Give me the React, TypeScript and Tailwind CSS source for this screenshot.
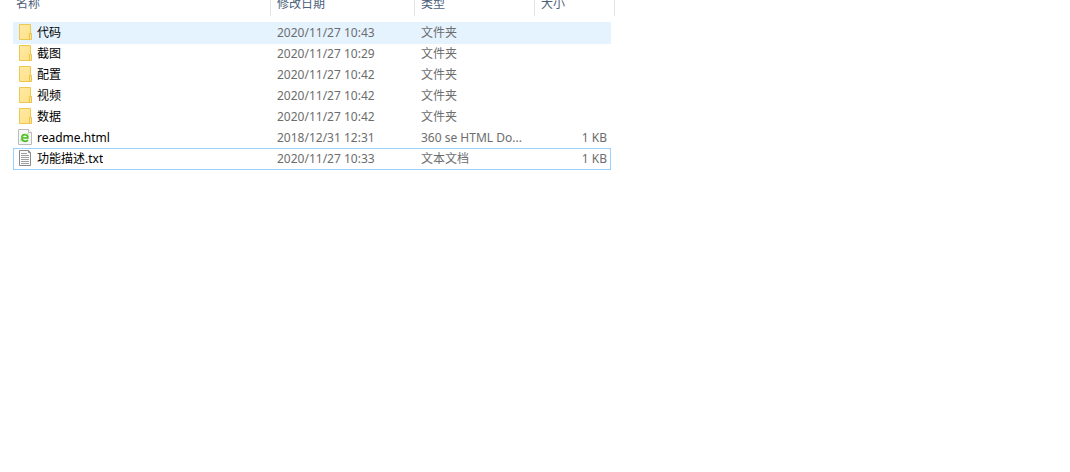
import React from "react";
import clsx from "clsx";

type FileKind = "folder" | "html" | "txt";

interface FileItem {
  name: string;
  kind: FileKind;
  modified: string;
  type: string;
  size?: string;
}

const files: FileItem[] = [
  { name: "代码", kind: "folder", modified: "2020/11/27 10:43", type: "文件夹" },
  { name: "截图", kind: "folder", modified: "2020/11/27 10:29", type: "文件夹" },
  { name: "配置", kind: "folder", modified: "2020/11/27 10:42", type: "文件夹" },
  { name: "视频", kind: "folder", modified: "2020/11/27 10:42", type: "文件夹" },
  { name: "数据", kind: "folder", modified: "2020/11/27 10:42", type: "文件夹" },
  { name: "readme.html", kind: "html", modified: "2018/12/31 12:31", type: "360 se HTML Do...", size: "1 KB" },
  { name: "功能描述.txt", kind: "txt", modified: "2020/11/27 10:33", type: "文本文档", size: "1 KB" },
];

const hovered = "代码";
const focused = "功能描述.txt";

const FolderIcon = () => (
  <svg width="16" height="16" viewBox="0 0 16 16" aria-hidden="true">
    <defs>
      <linearGradient id="folder" x1="0" y1="0" x2="1" y2="1">
        <stop offset="0" stopColor="#ffeaa4" />
        <stop offset="1" stopColor="#ffe086" />
      </linearGradient>
    </defs>
    <path d="M2.5 .5H13.5V15.5H2.5Z" fill="url(#folder)" stroke="#ecc850" />
    <path d="M12.5 15.5V9.5H14.5V15.5Z" fill="#ffe795" stroke="#e8c24a" />
  </svg>
);

const HtmlIcon = () => (
  <svg width="16" height="16" viewBox="0 0 16 16" aria-hidden="true">
    <path d="M1.5 .5H11.5L14.5 3.5V15.5H1.5Z" fill="#f7f7f7" stroke="#bcbcbc" />
    <path d="M11.5 .5V3.5H14.5" fill="#fff" stroke="#bcbcbc" />
    <path d="M4.8 9H10.9C10.9 6.6 9.7 5.7 7.9 5.7S4.8 7 4.8 9.1S6.2 12.3 8.1 12.3C9.4 12.3 10.3 11.9 10.9 11" fill="none" stroke="#45bd1c" strokeWidth="1.7" />
    <path d="M3.8 12.4C3 10 6 5.8 11.9 4.8" fill="none" stroke="#9be070" strokeWidth="0.8" />
  </svg>
);

const TxtIcon = () => (
  <svg width="16" height="16" viewBox="0 0 16 16" aria-hidden="true">
    <path d="M2.5 .5H11.5L13.5 2.5V15.5H2.5Z" fill="#fbfbfb" stroke="#8a8a8a" />
    <path d="M11.5 .5V2.5H13.5" fill="none" stroke="#8a8a8a" />
    <path d="M4 3.5H10M4 5.5H12M4 7.5H12M4 9.5H12M4 11.5H12M4 13.5H12" stroke="#a0a0a0" />
  </svg>
);

const icons = { folder: FolderIcon, html: HtmlIcon, txt: TxtIcon };

const HeaderLabel = ({ children, className }: { children: React.ReactNode; className?: string }) => (
  <div className={clsx("h-6 border-r border-[#e5e5e5] leading-[23px]", className)}>{children}</div>
);

const FileRow = ({ file }: { file: FileItem }) => {
  const Icon = icons[file.kind];

  // Highlight and focus frame reach one pixel below the row, as shadows they take no height
  return (
    <tr
      className={clsx(
        "h-[21px]",
        file.name === hovered && "bg-[#e5f3ff] shadow-[0_1px_#e5f3ff]",
        file.name === focused &&
          "shadow-[inset_0_1px_#99d1ff,inset_1px_0_#99d1ff,inset_-1px_0_#99d1ff,0_1px_#99d1ff]"
      )}
    >
      <td className="p-0 pl-1 text-black">
        <div className="flex items-start gap-1">
          <span className="shrink-0 pt-0.5">
            <Icon />
          </span>
          <span className="truncate leading-[21px]">{file.name}</span>
        </div>
      </td>
      <td className="p-0 pl-1.5 leading-[21px]">{file.modified}</td>
      <td className="p-0 pl-1.5 leading-[21px]">{file.type}</td>
      <td className="p-0 pr-1 text-right leading-[21px]">{file.size}</td>
    </tr>
  );
};

const App = () => {
  return (
    <main className="min-h-screen overflow-hidden bg-white pl-[13px] font-['Noto_Sans','Noto_Sans_CJK_SC',sans-serif] text-xs text-[#6d6d6d]">
      <table className="-mt-2 w-[598px] table-fixed border-separate border-spacing-0 whitespace-nowrap">
        <colgroup>
          <col className="w-[258px]" />
          <col className="w-[144px]" />
          <col className="w-[120px]" />
          <col className="w-[76px]" />
        </colgroup>
        <thead>
          <tr className="h-[30px] text-left align-top text-[#4c607a]">
            <th className="p-0 font-normal"><HeaderLabel className="pl-[3px]">名称</HeaderLabel></th>
            <th className="p-0 font-normal"><HeaderLabel className="pl-1.5">修改日期</HeaderLabel></th>
            <th className="p-0 font-normal"><HeaderLabel className="pl-1.5">类型</HeaderLabel></th>
            <th className="p-0 font-normal"><HeaderLabel className="-mr-1 pl-1.5">大小</HeaderLabel></th>
          </tr>
        </thead>
        <tbody>
          {files.map((file) => (
            <FileRow key={file.name} file={file} />
          ))}
        </tbody>
      </table>
    </main>
  );
};

export default App;
